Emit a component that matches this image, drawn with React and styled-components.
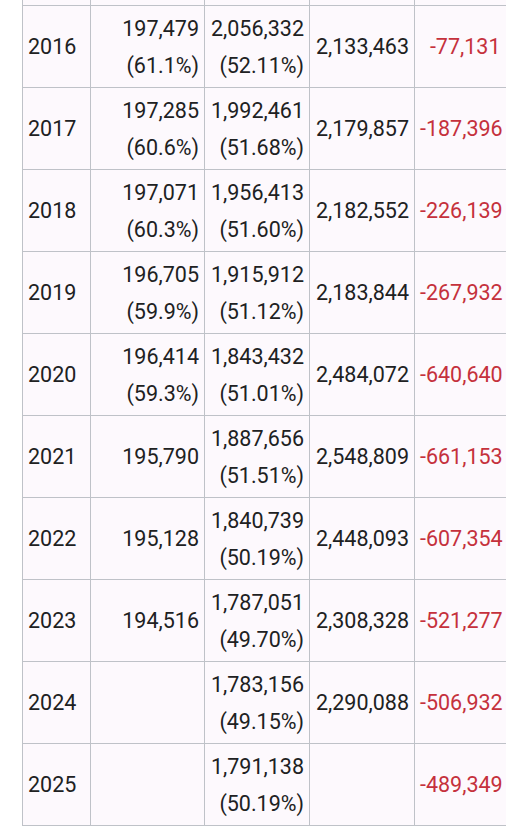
import styled, { createGlobalStyle } from 'styled-components'

const larguras=[68,114,105,105,91]

const rows = [
  { year: '2016', a: '197,479', ap: '(61.1%)', b: '2,056,332', bp: '(52.11%)', c: '2,133,463', d: '-77,131' },
  { year: '2017', a: '197,285', ap: '(60.6%)', b: '1,992,461', bp: '(51.68%)', c: '2,179,857', d: '-187,396' },
  { year: '2018', a: '197,071', ap: '(60.3%)', b: '1,956,413', bp: '(51.60%)', c: '2,182,552', d: '-226,139' },
  { year: '2019', a: '196,705', ap: '(59.9%)', b: '1,915,912', bp: '(51.12%)', c: '2,183,844', d: '-267,932' },
  { year: '2020', a: '196,414', ap: '(59.3%)', b: '1,843,432', bp: '(51.01%)', c: '2,484,072', d: '-640,640' },
  { year: '2021', a: '195,790', b: '1,887,656', bp: '(51.51%)', c: '2,548,809', d: '-661,153' },
  { year: '2022', a: '195,128', b: '1,840,739', bp: '(50.19%)', c: '2,448,093', d: '-607,354' },
  { year: '2023', a: '194,516', b: '1,787,051', bp: '(49.70%)', c: '2,308,328', d: '-521,277' },
  { year: '2024', b: '1,783,156', bp: '(49.15%)', c: '2,290,088', d: '-506,932' },
  { year: '2025', b: '1,791,138', bp: '(50.19%)', d: '-489,349' },
]

export default function App(){
  return (
    <>
      <Global />
      <Tabela>
        <colgroup>
          {larguras.map((w,i)=><Coluna key={i} $largura={w} />)}
        </colgroup>
        <tbody>
          <Resto>
            <td></td><td></td><td></td><td></td><td></td>
          </Resto>
          {rows.map(r=>(
            <Linha key={r.year}>
              <Ano>{r.year}</Ano>
              <Num>{r.a}{r.ap && <><br/>{r.ap}</>}</Num>
              <Num>{r.b}{r.bp && <><br/>{r.bp}</>}</Num>
              <Num>{r.c}</Num>
              <Num $negativo>{r.d}</Num>
            </Linha>
          ))}
        </tbody>
      </Tabela>
    </>
  )
}

const Global=createGlobalStyle`
body{
margin:0;
background:#ffffff;
font-family:Roboto,"Liberation Sans",sans-serif;
}
`
const Tabela=styled.table`
margin-left:22px;
width:483px;
table-layout:fixed;
border-collapse:collapse;
background:#fdf9fd;
color:#202122;
font-size:21.5px;
td{
border:1px solid #bfc2c8;
}
td:last-child{
border-right:none;
}
`
const Coluna=styled.col`
width:${p=>p.$largura}px;
`
const Resto=styled.tr`
height:5px;
td{
border-top:none;
padding:0;
}
`
const Linha=styled.tr`
height:82px;
td{
line-height:37px;
padding:4px 5px 3px 5px;
vertical-align:middle;
white-space:nowrap;
}
`
const Ano=styled.td`
text-align:left;
`
const Num=styled.td`
text-align:right;
color:${p=>p.$negativo?'#c5313c':'#202122'};
`
